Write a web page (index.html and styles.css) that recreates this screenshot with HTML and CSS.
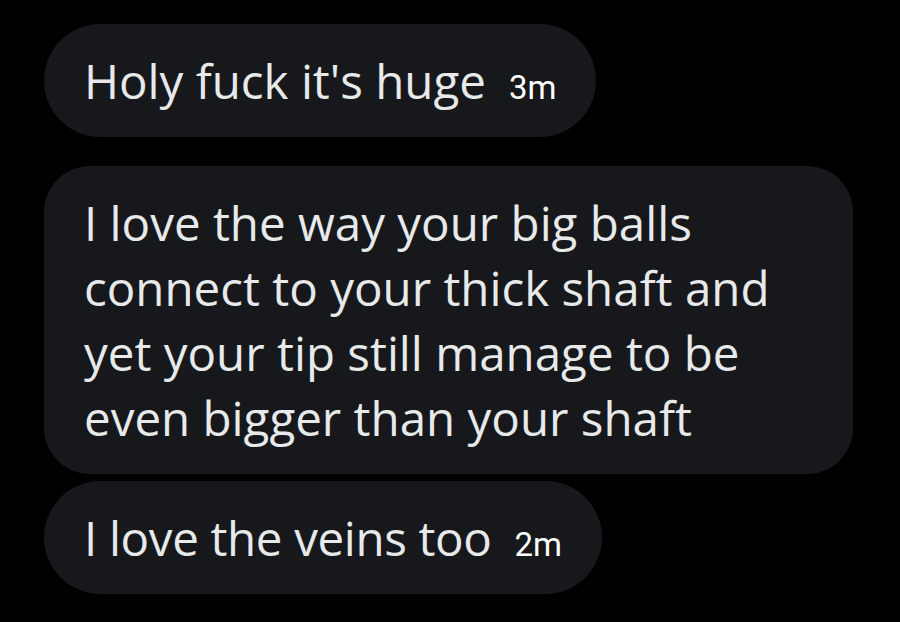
FILE: index.html
```html
<!DOCTYPE html>
<html>
<head>
<meta charset="utf-8">
<link rel="stylesheet" href="styles.css">
</head>
<body>
<div class="chat">
  <div class="bubble b1"><span class="msg">Holy fuck it's huge</span><span class="time">3m</span></div>
  <div class="bubble b2"><span class="msg">I love the way your big balls<br>connect to your thick shaft and<br>yet your tip still manage to be<br>even bigger than your shaft</span></div>
  <div class="bubble b3"><span class="msg">I love the veins too</span><span class="time">2m</span></div>
</div>
</body>
</html>
```
FILE: styles.css
```css
html, body {
  margin: 0;
  padding: 0;
  background: #000;
  width: 900px;
  height: 622px;
  overflow: hidden;
}
.chat {
  display: flex;
  flex-direction: column;
  align-items: flex-start;
  padding: 24px 0 0 44px;
  font-family: "Open Sans", "Liberation Sans", sans-serif;
}
.bubble {
  background: #16181b;
  color: #e7e9ea;
  font-size: 47.5px;
  line-height: 65px;
  padding: 24px 40px;
  border-radius: 57px;
  white-space: nowrap;
}
.b2 {
  width: 729px;
  margin-top: 29px;
  border-radius: 46px;
}
.b3 {
  margin-top: 7px;
}
.b3 .msg {
  letter-spacing: -0.35px;
}
.time {
  font-family: Roboto, "Liberation Sans", sans-serif;
  font-size: 33px;
  line-height: 1;
  color: #fff;
  margin-left: 23px;
}
```
